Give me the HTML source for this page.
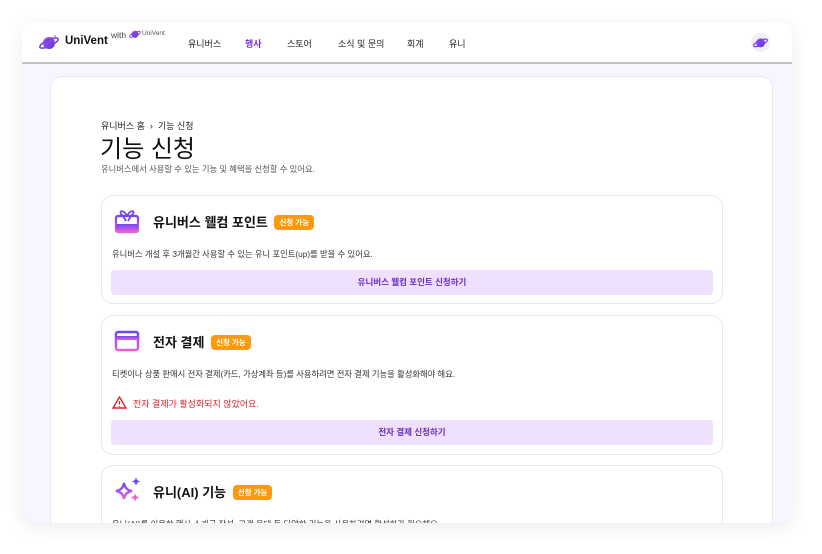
<!DOCTYPE html>
<html><head><meta charset="utf-8"><style>
*{margin:0;padding:0;box-sizing:border-box}
body{width:822px;height:554px;background:#fff;font-family:"Liberation Sans","Noto Sans CJK KR",sans-serif;color:#111;position:relative;overflow:hidden}
.win{position:absolute;left:22px;top:22px;width:770px;height:501px;border-radius:12px;background:#f8f5fe;overflow:hidden;box-shadow:0 4px 18px rgba(0,0,0,.08)}
.hdr{position:absolute;left:0;top:0;width:770px;height:42px;background:#fff;border-bottom:2px solid #c4c4c4}
.nav{position:absolute;top:15px;font-size:9px;color:#222}
.main{position:absolute;left:28px;top:54px;width:723px;height:460px;background:#fff;border:1px solid #ece8f3;border-radius:12px}
.card{position:absolute;left:50px;width:622px;background:#fff;border:1px solid #e8e6ec;border-radius:12px}
.ct{position:absolute;left:51px;font-size:13px;font-weight:bold;color:#111}
.badge{display:inline-block;background:#fb9a10;color:#fff;font-size:7.5px;font-weight:bold;padding:2px 5px;border-radius:4px;vertical-align:2px;margin-left:3px}
.desc{position:absolute;left:10px;font-size:8.3px;color:#333}
.btn{position:absolute;left:9px;width:602px;height:25px;background:#efe0fd;border-radius:4px;color:#6a2fc0;font-size:8.5px;font-weight:bold;text-align:center;line-height:25px}
</style></head><body>
<div class="win">
<div class="hdr">
<svg style="position:absolute;left:17px;top:12px" width="20" height="17" viewBox="0 0 20 17"><defs><linearGradient id="g" x1="0" y1="0" x2="1" y2="1"><stop offset="0" stop-color="#a05bf0"/><stop offset="1" stop-color="#5b2fd6"/></linearGradient></defs><circle cx="10" cy="9" r="6" fill="url(#g)"/><ellipse cx="10" cy="9" rx="10" ry="3.2" transform="rotate(-25 10 9)" fill="none" stroke="#7b3fe4" stroke-width="1.6"/><circle cx="16" cy="2" r="1" fill="#c58cff"/></svg>
<div style="position:absolute;left:43px;top:13px;font-size:11.5px;font-weight:bold">UniVent</div>
<div style="position:absolute;left:89px;top:8px;font-size:8.5px;color:#444">with</div>
<svg style="position:absolute;left:107px;top:7px" width="12" height="10" viewBox="0 0 20 17"><circle cx="10" cy="9" r="6" fill="url(#g)"/><ellipse cx="10" cy="9" rx="10" ry="3.2" transform="rotate(-25 10 9)" fill="none" stroke="#7b3fe4" stroke-width="1.6"/></svg>
<div style="position:absolute;left:120px;top:8px;font-size:6.5px;color:#555">UniVent</div>
<div class="nav" style="left:166px">유니버스</div>
<div class="nav" style="left:223px;color:#7a2fd0;font-weight:bold">행사</div>
<div class="nav" style="left:265px">스토어</div>
<div class="nav" style="left:316px">소식 및 문의</div>
<div class="nav" style="left:385px">회계</div>
<div class="nav" style="left:427px">유니</div>
<div style="position:absolute;left:729px;top:11px;width:19px;height:19px;border-radius:50%;background:#f1eef6"></div>
<svg style="position:absolute;left:731px;top:14px" width="15" height="13" viewBox="0 0 20 17"><circle cx="10" cy="9" r="6" fill="url(#g)"/><ellipse cx="10" cy="9" rx="10" ry="3.2" transform="rotate(-25 10 9)" fill="none" stroke="#7b3fe4" stroke-width="1.6"/></svg>
</div>
<div class="main">
<div style="position:absolute;left:50px;top:42px;font-size:9px;color:#222">유니버스 홈 &nbsp;›&nbsp; 기능 신청</div>
<div style="position:absolute;left:49px;top:52px;font-size:24px;color:#111">기능 신청</div>
<div style="position:absolute;left:50px;top:86px;font-size:8.3px;color:#555">유니버스에서 사용할 수 있는 기능 및 혜택을 신청할 수 있어요.</div>

<div class="card" style="top:118px;height:109px">
<svg style="position:absolute;left:11px;top:12px" width="28" height="26" viewBox="0 0 28 26"><defs><linearGradient id="p" x1="0" y1="0" x2="0" y2="1"><stop offset="0" stop-color="#6f48f0"/><stop offset="1" stop-color="#ef5fd8"/></linearGradient></defs><rect x="3" y="8" width="22" height="16" rx="2" fill="none" stroke="url(#p)" stroke-width="2.2"/><rect x="3" y="16" width="22" height="8" rx="1" fill="url(#p)"/><path d="M14 8 C11 2 6 2 8 6 L10 8 M14 8 C17 2 22 2 20 6 L18 8 M10 8 L13 13 M18 8 L15 13" fill="none" stroke="#6f48f0" stroke-width="1.8"/></svg>
<div class="ct" style="top:16px">유니버스 웰컴 포인트 <span class="badge">신청 가능</span></div>
<div class="desc" style="top:52px">유니버스 개설 후 3개월간 사용할 수 있는 유니 포인트(up)를 받을 수 있어요.</div>
<div class="btn" style="top:74px">유니버스 웰컴 포인트 신청하기</div>
</div>

<div class="card" style="top:238px;height:140px">
<svg style="position:absolute;left:11px;top:12px" width="28" height="26" viewBox="0 0 28 26"><rect x="3" y="4" width="22" height="18" rx="2" fill="none" stroke="url(#p)" stroke-width="2.5"/><rect x="3" y="8" width="22" height="4" fill="url(#p)"/></svg>
<div class="ct" style="top:16px">전자 결제 <span class="badge">신청 가능</span></div>
<div class="desc" style="top:52px">티켓이나 상품 판매시 전자 결제(카드, 가상계좌 등)를 사용하려면 전자 결제 기능을 활성화해야 해요.</div>
<svg style="position:absolute;left:10px;top:80px" width="15" height="13" viewBox="0 0 15 13"><path d="M7.5 1 L14 12 L1 12 Z" fill="none" stroke="#d9262c" stroke-width="1.4"/><path d="M7.5 5 V8.5 M7.5 10 V10.8" stroke="#d9262c" stroke-width="1.3"/></svg>
<div class="desc" style="left:31px;top:81px;color:#d9262c;font-size:9px">전자 결제가 활성화되지 않았어요.</div>
<div class="btn" style="top:104px">전자 결제 신청하기</div>
</div>

<div class="card" style="top:388px;height:100px">
<svg style="position:absolute;left:11px;top:10px" width="30" height="30" viewBox="0 0 30 30"><defs><linearGradient id="s" x1="0" y1="0" x2="0" y2="1"><stop offset="0" stop-color="#6f48f0"/><stop offset="1" stop-color="#ef5fd8"/></linearGradient></defs><path d="M11 7 Q12 14 19 15 Q12 16 11 23 Q10 16 3 15 Q10 14 11 7 Z" fill="none" stroke="url(#s)" stroke-width="2.4"/><path d="M23 1 Q23.5 5 27.5 5.5 Q23.5 6 23 10 Q22.5 6 18.5 5.5 Q22.5 5 23 1Z" fill="#6f48f0"/><path d="M22 17 Q22.5 21 26.5 21.5 Q22.5 22 22 26 Q21.5 22 17.5 21.5 Q21.5 21 22 17Z" fill="#ef5fd8"/></svg>
<div class="ct" style="top:16px">유니(AI) 기능 <span class="badge">신청 가능</span></div>
<div class="desc" style="top:52px">유니(AI)를 이용한 행사 소개글 작성, 고객 응대 등 다양한 기능을 사용하려면 활성화가 필요해요.</div>
</div>
</div>
</div>
</body></html>
